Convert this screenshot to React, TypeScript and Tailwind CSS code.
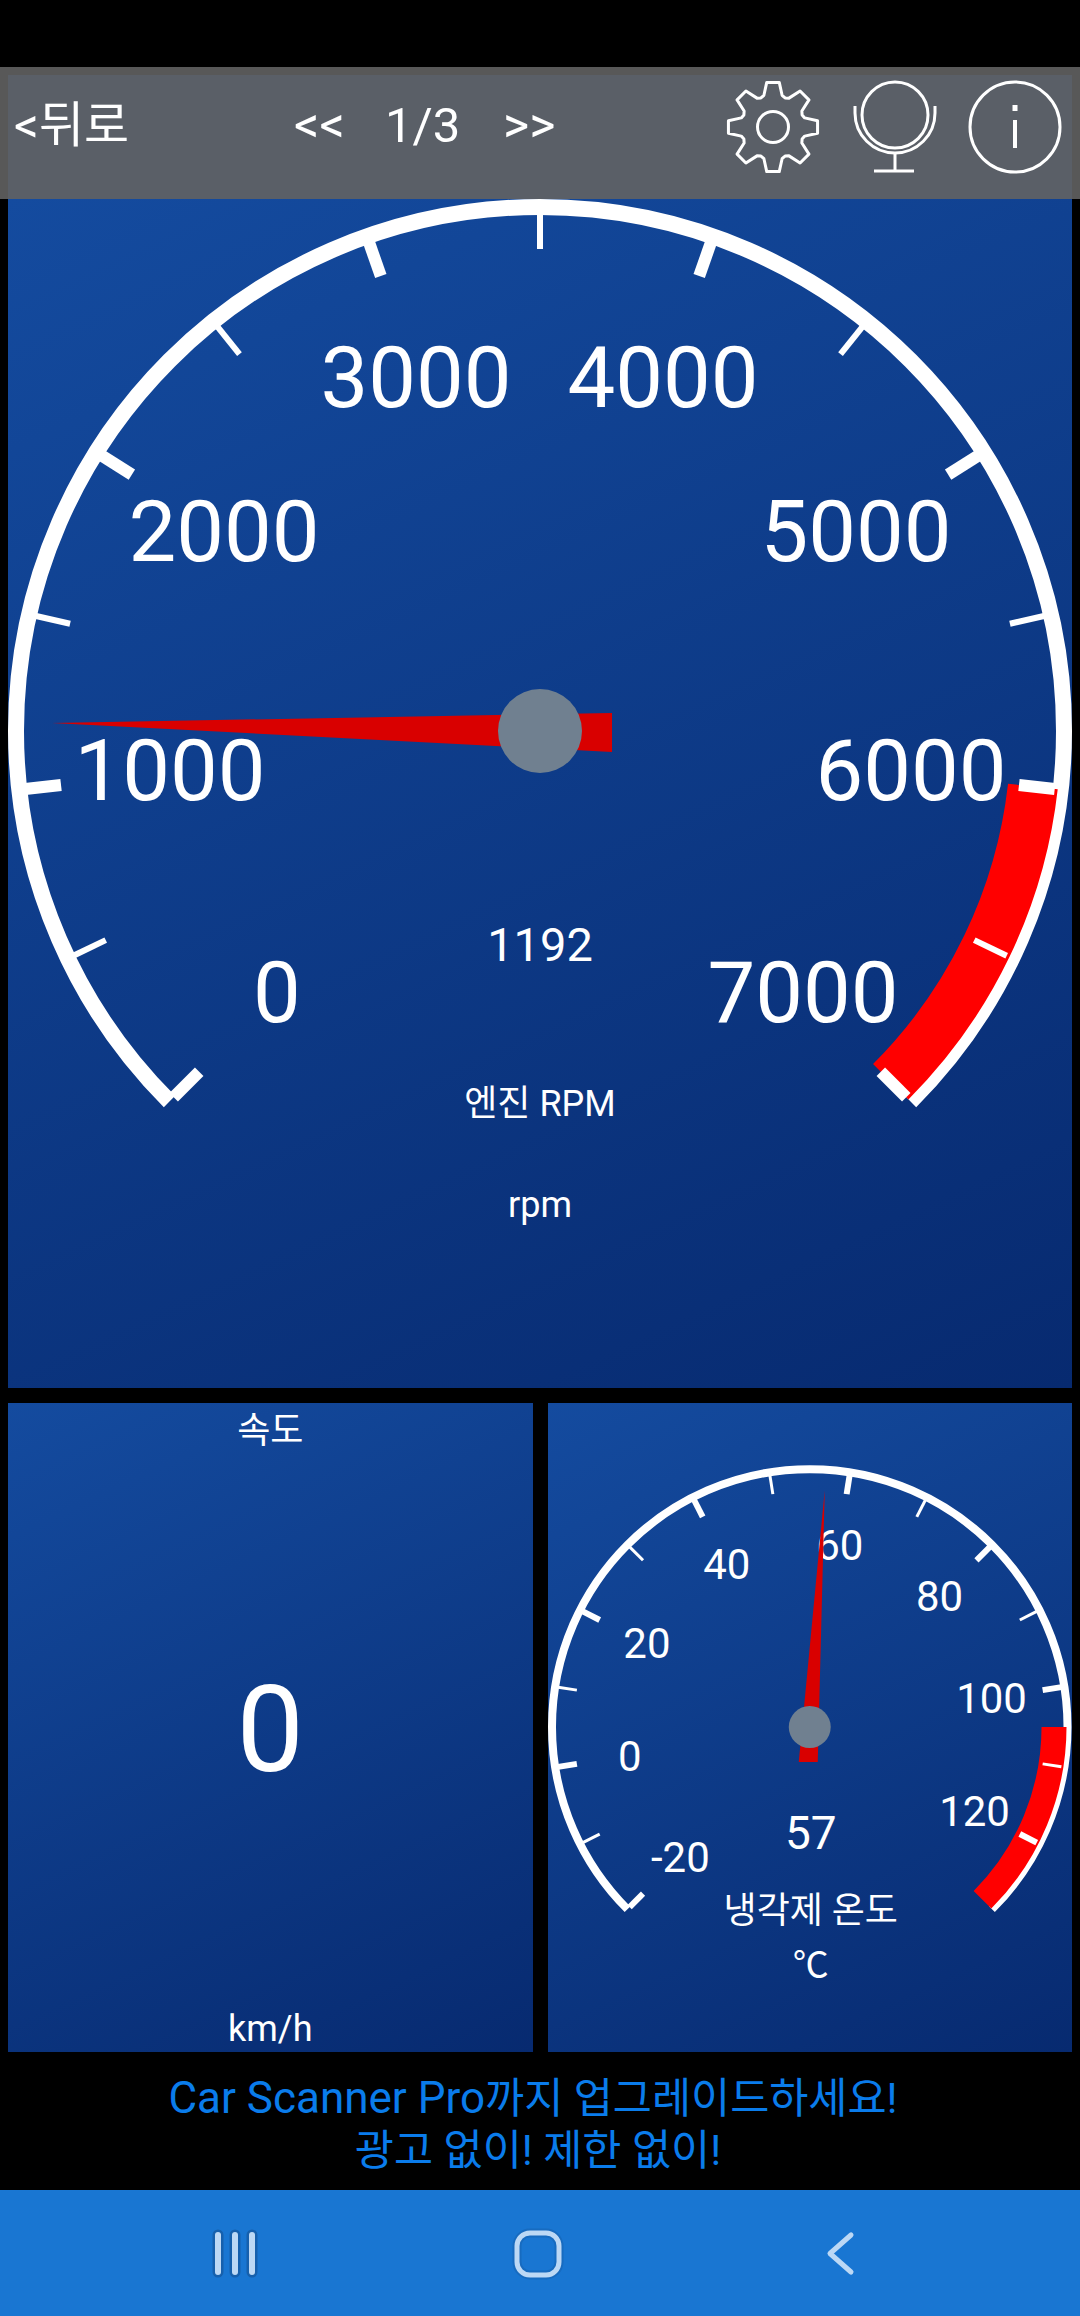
import React from "react";

const polar = (cx: number, cy: number, r: number, theta: number) => {
  const a = ((225 - theta) * Math.PI) / 180;
  return [cx + r * Math.cos(a), cy - r * Math.sin(a)];
};

const arc = (cx: number, cy: number, r: number, t0: number, t1: number) => {
  const [x0, y0] = polar(cx, cy, r, t0);
  const [x1, y1] = polar(cx, cy, r, t1);
  const large = t1 - t0 > 180 ? 1 : 0;
  return `M${x0} ${y0}A${r} ${r} 0 ${large} 1 ${x1} ${y1}`;
};

type Label = [string, number, number, number];

function Dial(props: {
  viewBox: string;
  cx: number;
  cy: number;
  outer: number;
  arcW: number;
  redR: number;
  redW: number;
  redFrom: number;
  tickOut: number;
  tickIn: number;
  majorW: number;
  minorW: number;
  step: number;
  count: number;
  needle: string;
  hub: number;
  labels: Label[];
}) {
  const p = props;
  const ticks = [];
  for (let i = 0; i <= p.count; i++) {
    const t = i * p.step;
    const a = polar(p.cx, p.cy, p.tickOut, t);
    const b = polar(p.cx, p.cy, p.tickIn, t);
    ticks.push(
      <line key={i} x1={a[0]} y1={a[1]} x2={b[0]} y2={b[1]} stroke="#fff" strokeWidth={i % 2 === 0 ? p.majorW : p.minorW} />
    );
  }
  return (
    <svg className="block h-full w-full" viewBox={p.viewBox}>
      {p.labels.map(([text, x, y, size]) => (
        <text key={text} x={x} y={y + 0.3415 * size} fontSize={size} textAnchor="middle" fill="#fff">
          {text}
        </text>
      ))}
      <path d={arc(p.cx, p.cy, p.outer - p.arcW / 2, 0, 270)} fill="none" stroke="#fff" strokeWidth={p.arcW} />
      <path d={arc(p.cx, p.cy, p.redR, p.redFrom, 270)} fill="none" stroke="#ff0000" strokeWidth={p.redW} />
      {ticks}
      <polygon points={p.needle} fill="#d90000" />
      <circle cx={p.cx} cy={p.cy} r={p.hub} fill="#708090" />
    </svg>
  );
}

function Gear() {
  const pts: string[] = [];
  const pt = (r: number, deg: number) => {
    const a = (deg * Math.PI) / 180;
    return `${773 + r * Math.cos(a)},${127 + r * Math.sin(a)}`;
  };
  for (let i = 0; i < 8; i++) {
    const a = i * 45;
    pts.push(pt(33, a - 16), pt(45, a - 8), pt(45, a + 8), pt(33, a + 16), pt(31.5, a + 22.5));
  }
  return (
    <g fill="none" stroke="#fff" strokeWidth="3" strokeLinejoin="round">
      <polygon points={pts.join(" ")} />
      <circle cx="773" cy="127" r="15.5" />
    </g>
  );
}

const rpmLabels: Label[] = [
  ["3000", 416, 378, 85],
  ["4000", 663, 378, 85],
  ["2000", 224, 532, 85],
  ["5000", 856, 532, 85],
  ["1000", 170, 771, 85],
  ["6000", 911, 771, 85],
  ["0", 277, 993, 85],
  ["7000", 803, 993, 85],
  ["1192", 540, 945, 47],
  ["엔진 RPM", 540, 1104, 36],
  ["rpm", 540, 1205, 36],
];

const tempLabels: Label[] = [
  ["-20", 680.5, 1857.5, 42],
  ["0", 630, 1756.5, 42],
  ["20", 647, 1644, 42],
  ["40", 727, 1564.5, 42],
  ["60", 840, 1545.5, 42],
  ["80", 940, 1597, 42],
  ["100", 992, 1699, 42],
  ["120", 975, 1811.5, 42],
  ["57", 811, 1833, 46],
  ["냉각제 온도", 811, 1911, 36],
  ["℃", 811, 1966, 36],
];

export default function App() {
  return (
    <div className="flex h-[2316px] w-[1080px] flex-col overflow-hidden bg-black pt-[67px] font-[Roboto,'Noto_Sans_CJK_KR',sans-serif] text-white">
      {/* Top bar */}
      <div className="h-[132px] shrink-0 bg-[#585858] px-2 pt-2">
        <div className="flex h-full items-center bg-[#5a5f67] pb-[24px]">
          <span className="w-[286px] pl-[6px] text-[49px] leading-none">&lt;뒤로</span>
          <span className="w-[91px] text-[50px] leading-none">&lt;&lt;</span>
          <span className="w-[118px] text-[49px] leading-none">1/3</span>
          <span className="text-[50px] leading-none">&gt;&gt;</span>
          <svg className="ml-auto h-[110px] w-[350px] self-start" viewBox="722 75 350 110">
            <Gear />
            <g fill="none" stroke="#fff" strokeWidth="3">
              <circle cx="895" cy="115" r="33" />
              <path d="M855 106V113A40 40 0 0 0 935 113V106" />
              <path d="M895 154V171M874 171H914" />
              <circle cx="1015" cy="127" r="45" />
              <path d="M1015 120V148" strokeWidth="4" />
              <path d="M1015 105V111" strokeWidth="5" />
            </g>
          </svg>
        </div>
      </div>

      {/* RPM gauge */}
      <div className="mx-2 h-[1189px] shrink-0 bg-linear-[155deg] from-[#144b9f] to-[#072a70]">
        <Dial
          viewBox="8 199 1064 1189"
          cx={540}
          cy={731}
          outer={532}
          arcW={16}
          redR={496}
          redW={50}
          redFrom={(270 * 6) / 7}
          tickOut={518}
          tickIn={482}
          majorW={12}
          minorW={6}
          step={270 / 14}
          count={14}
          needle="52,723 612,713 612,752"
          hub={42}
          labels={rpmLabels}
        />
      </div>

      {/* Lower panels */}
      <div className="mx-2 mt-[15px] grid h-[649px] shrink-0 grid-cols-2 gap-[15px]">
        <div className="flex flex-col items-center justify-between bg-linear-[155deg] from-[#144b9f] to-[#072a70]">
          <span className="mt-[7px] text-[36px] leading-[42px]">속도</span>
          <span className="text-[120px] leading-none">0</span>
          <span className="mb-[2px] text-[36px] leading-[42px]">km/h</span>
        </div>
        <div className="bg-linear-[155deg] from-[#144b9f] to-[#072a70]">
          <Dial
            viewBox="548 1403 525 649"
            cx={810}
            cy={1727}
            outer={262}
            arcW={8}
            redR={244.5}
            redW={25}
            redFrom={225}
            tickOut={255}
            tickIn={236}
            majorW={6}
            minorW={3}
            step={18}
            count={14}
            needle="825,1490 818,1762 799,1762"
            hub={21}
            labels={tempLabels}
          />
        </div>
      </div>

      {/* Upgrade banner */}
      <div className="flex h-[138px] shrink-0 flex-col items-center justify-center pt-[6px] text-[42.5px] leading-[52px] text-[#0a7ceb]">
        <span className="pr-[14px]">
          <span className="text-[44px]">Car Scanner Pro</span>까지 업그레이드하세요!
        </span>
        <span className="pr-[4px]">광고 없이! 제한 없이!</span>
      </div>

      {/* Navigation bar */}
      <div className="flex h-[126px] shrink-0 items-center bg-[#1976d2]">
        <svg className="h-[126px] w-[1080px]" viewBox="0 2190 1080 126">
          <g stroke="#1660ad" strokeWidth="11" strokeLinecap="round">
            <line x1="218" y1="2235" x2="218" y2="2272" />
            <line x1="235" y1="2235" x2="235" y2="2272" />
            <line x1="252" y1="2235" x2="252" y2="2272" />
          </g>
          <g stroke="#bcd8f5" strokeWidth="6" strokeLinecap="round">
            <line x1="218" y1="2235" x2="218" y2="2272" />
            <line x1="235" y1="2235" x2="235" y2="2272" />
            <line x1="252" y1="2235" x2="252" y2="2272" />
          </g>
          <rect x="517" y="2233" width="42" height="42" rx="13" fill="none" stroke="#1660ad" strokeWidth="9" opacity="0.5" />
          <rect x="517" y="2233" width="42" height="42" rx="13" fill="none" stroke="#bcd8f5" strokeWidth="5" />
          <path d="M851 2235L830 2253.5L851 2272" fill="none" stroke="#bcd8f5" strokeWidth="5" strokeLinecap="round" strokeLinejoin="round" />
        </svg>
      </div>
    </div>
  );
}
